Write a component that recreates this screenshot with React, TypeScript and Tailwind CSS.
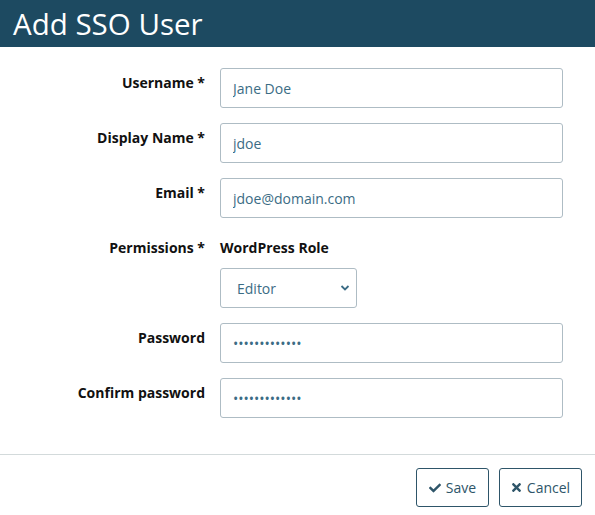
import React from "react";
import { FaCheck, FaTimes } from "react-icons/fa";

const font = { fontFamily: '"Open Sans", "Noto Sans", sans-serif' };

function Row({ label, children }: { label: string; children: React.ReactNode }) {
  return (
    <div className="flex mb-[15px]">
      <div className="w-[205px] shrink-0 text-right pt-[5px] text-[14px] leading-[20px] font-bold text-[#111]">
        {label}
      </div>
      <div className="ml-[15px] w-[343px]">{children}</div>
    </div>
  );
}

function TextInput({ value, type = "text" }: { value: string; type?: string }) {
  return (
    <input
      type={type}
      defaultValue={value}
      readOnly
      className="block w-full h-[40px] px-[12px] border border-[#aebcc4] rounded-[3px] text-[14px] text-[#3b6c85] outline-none bg-white"
      style={font}
    />
  );
}

export default function App() {
  return (
    <div className="w-[595px] h-[515px] bg-white overflow-hidden" style={font}>
      <div className="h-[47px] bg-[#1d4a61] flex items-center px-[13px]">
        <h1 className="text-white text-[29.5px] leading-none font-normal">Add SSO User</h1>
      </div>
      <div className="pt-[21px] pb-[21px]">
        <Row label="Username *">
          <TextInput value="Jane Doe" />
        </Row>
        <Row label="Display Name *">
          <TextInput value="jdoe" />
        </Row>
        <Row label="Email *">
          <TextInput value="jdoe@domain.com" />
        </Row>
        <Row label="Permissions *">
          <div className="pt-[5px] text-[14px] leading-[20px] font-bold text-[#111] mb-[10px]">WordPress Role</div>
          <div className="relative w-[137px] h-[40px] border border-[#aebcc4] rounded-[3px] bg-white flex items-center pl-[16px] text-[14px] text-[#3b6c85]">
            Editor
            <svg className="absolute right-[6px] top-[15px]" width="10" height="8" viewBox="0 0 10 8">
              <path d="M1.5 2 L5 5.5 L8.5 2" stroke="#3b6c85" strokeWidth="1.8" fill="none" />
            </svg>
          </div>
        </Row>
        <Row label="Password">
          <TextInput value="abcdefghijklm" type="password" />
        </Row>
        <Row label="Confirm password">
          <TextInput value="abcdefghijklm" type="password" />
        </Row>
      </div>
      <div className="border-t border-[#d3dadb] flex justify-end gap-[10px] pt-[13px] pr-[13px]">
        <button className="h-[39px] w-[73px] border border-[#2e5569] rounded-[3px] text-[#2e5569] text-[14px] flex items-center justify-center gap-[5px] bg-white">
          <FaCheck className="w-[12px] h-[12px]" />
          Save
        </button>
        <button className="h-[39px] w-[83px] border border-[#2e5569] rounded-[3px] text-[#2e5569] text-[14px] flex items-center justify-center gap-[5px] bg-white">
          <FaTimes className="w-[11px] h-[13px]" />
          Cancel
        </button>
      </div>
    </div>
  );
}
